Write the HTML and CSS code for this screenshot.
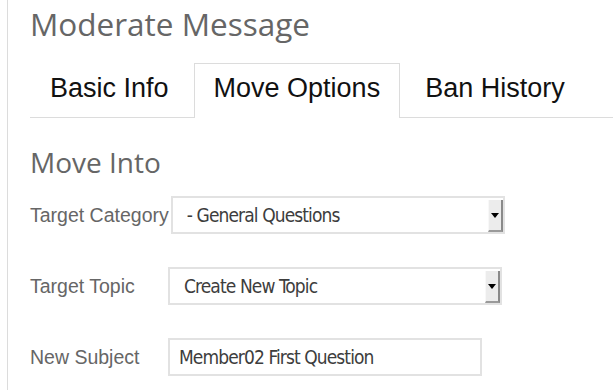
FILE: index.html
```html
<!DOCTYPE html>
<html lang="en">
<head>
  <meta charset="UTF-8">
  <title>Moderate Message</title>
  <link rel="stylesheet" href="styles.css">
</head>
<body>
  <div class="panel">
    <h1 class="page-title">Moderate Message</h1>

    <ul class="tabs">
      <li class="tab">Basic Info</li>
      <li class="tab active">Move Options</li>
      <li class="tab">Ban History</li>
    </ul>

    <h2 class="section-title">Move Into</h2>

    <div class="form-row">
      <label for="target-category">Target Category</label>
      <div class="select-wrap">
        <select id="target-category">
          <option>- General Questions</option>
        </select>
        <span class="arrow-btn"></span>
      </div>
    </div>

    <div class="form-row">
      <label for="target-topic">Target Topic</label>
      <div class="select-wrap">
        <select id="target-topic">
          <option>Create New Topic</option>
        </select>
        <span class="arrow-btn"></span>
      </div>
    </div>

    <div class="form-row">
      <label for="new-subject">New Subject</label>
      <input id="new-subject" class="text-input" type="text" value="Member02 First Question">
    </div>
  </div>
</body>
</html>
```

FILE: styles.css
```css
body {
  margin: 0;
  padding: 0;
  background-color: #fff;
  font-family: "Open Sans", sans-serif;
}

.panel {
  margin-left: 7px;
  min-height: 390px;
  border-left: 1px solid #dcdcdc;
  padding: 6px 0 0 22px;
  box-sizing: border-box;
}

.page-title {
  margin: 0;
  font-size: 31.5px;
  line-height: 36px;
  font-weight: normal;
  color: #666;
}

.tabs {
  display: flex;
  list-style: none;
  margin: 21px 0 0 0;
  padding: 0;
  border-bottom: 1px solid #dcdcdc;
}

.tab {
  padding: 9px 19px 14px;
  margin-right: 5px;
  margin-bottom: -1px;
  border: 1px solid transparent;
  border-bottom: none;
  font-family: "Liberation Sans", Arial, sans-serif;
  font-size: 27px;
  line-height: 30px;
  color: #111;
}

.tab.active {
  border-color: #dcdcdc;
  background-color: #fff;
  padding-bottom: 15px;
}

.section-title {
  margin: 27px 0 0 0;
  font-size: 28px;
  line-height: 34px;
  font-weight: normal;
  color: #666;
}

.form-row {
  display: flex;
  align-items: center;
  margin-top: 17px;
}

.form-row + .form-row {
  margin-top: 33px;
}

.form-row label {
  min-width: 136px;
  margin-right: 2px;
  flex-shrink: 0;
  font-family: "Liberation Sans", Arial, sans-serif;
  font-size: 19.5px;
  color: #666;
}

.select-wrap {
  display: flex;
  width: 334px;
  height: 38px;
  box-sizing: border-box;
  border: 2px solid #e2e2e2;
  background-color: #fff;
}

.select-wrap select {
  flex: 1;
  appearance: none;
  -webkit-appearance: none;
  border: none;
  outline: none;
  background: transparent;
  padding: 0 0 0 14px;
  font-family: "DejaVu Sans", sans-serif;
  font-stretch: condensed;
  font-size: 19px;
  letter-spacing: -0.9px;
  color: #3d3d3d;
}

.arrow-btn {
  width: 12px;
  margin: 2px 0 0 0;
  background-color: #ececec;
  border-left: 1px solid #f8f8f8;
  border-right: 2px solid #8a8a8a;
  border-bottom: 2px solid #9a9a9a;
  display: flex;
  align-items: center;
  justify-content: center;
}

.arrow-btn::after {
  content: "";
  border-left: 4px solid transparent;
  border-right: 4px solid transparent;
  border-top: 5px solid #000;
}

.text-input {
  width: 314px;
  height: 38px;
  box-sizing: border-box;
  border: 2px solid #e2e2e2;
  padding: 0 0 0 9px;
  outline: none;
  font-family: "DejaVu Sans", sans-serif;
  font-stretch: condensed;
  font-size: 19px;
  letter-spacing: -0.9px;
  color: #3d3d3d;
}
```
